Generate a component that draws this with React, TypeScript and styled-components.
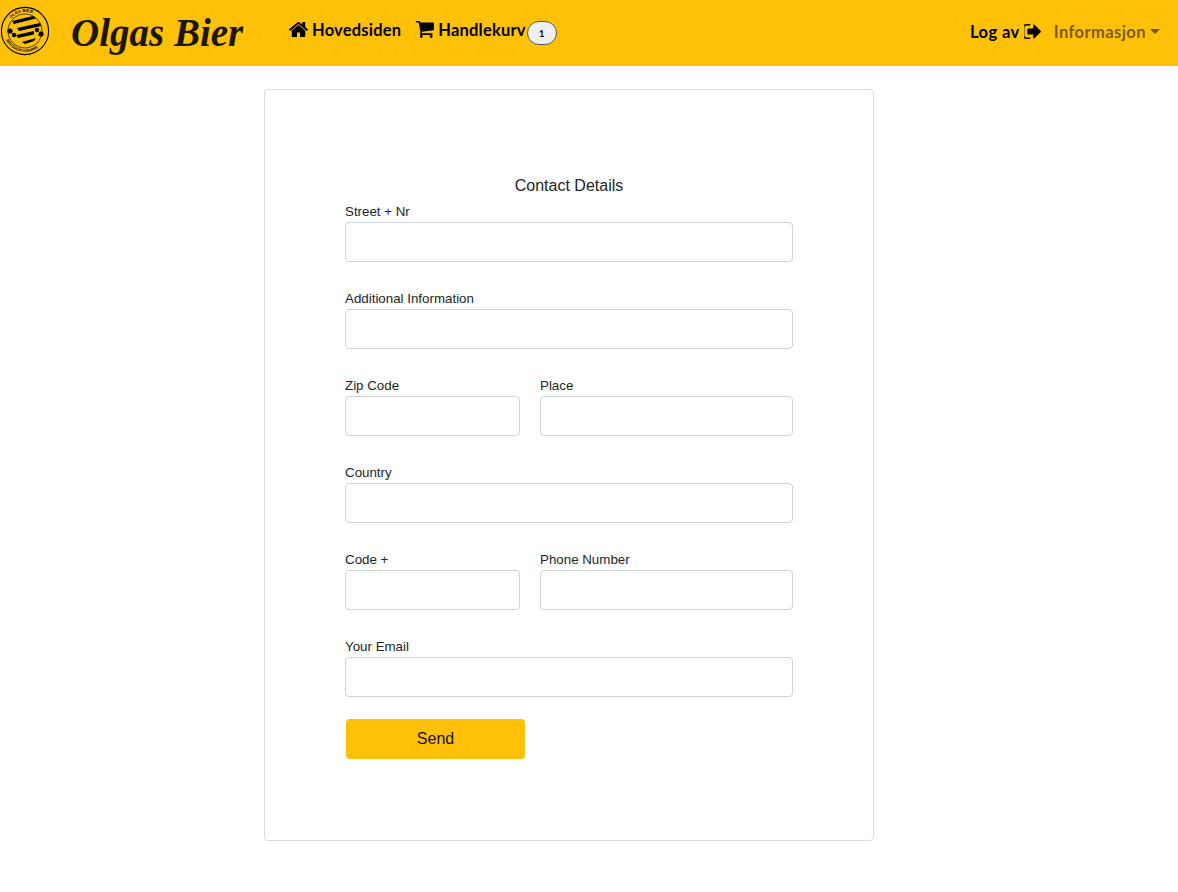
import React from 'react';
import styled, { createGlobalStyle } from 'styled-components';

const GlobalStyle = createGlobalStyle`
  * {
    box-sizing: border-box;
  }
  body {
    margin: 0;
    background: #fff;
    font-family: 'Liberation Sans', Arial, sans-serif;
    color: #212529;
  }
`;

const Navbar = styled.nav`
  display: flex;
  align-items: center;
  height: 66px;
  background: #ffc107;
`;

const LogoMark = styled.svg`
  width: 50px;
  height: 50px;
  margin-top: -4px;
  flex: none;
`;

const Brand = styled.a`
  margin-left: 21px;
  width: 218px;
  font-family: 'Liberation Serif', serif;
  font-size: 39px;
  font-style: italic;
  font-weight: 700;
  line-height: 66px;
  white-space: nowrap;
  color: #1c1708;
`;

const NavLinks = styled.div`
  display: flex;
  align-items: center;
  flex: 1;
  gap: 14px;
  margin-top: -7px;
`;

const NavLink = styled.a<{ $muted?: boolean }>`
  display: flex;
  align-items: center;
  gap: 4px;
  font-family: 'Lato', 'Noto Sans', sans-serif;
  font-size: 16.5px;
  font-weight: 700;
  letter-spacing: 0.2px;
  white-space: nowrap;
  color: ${(p) => (p.$muted ? 'rgba(0, 0, 0, 0.55)' : '#000')};
`;

const Icon = styled.svg<{ $w: number; $h: number }>`
  width: ${(p) => p.$w}px;
  height: ${(p) => p.$h}px;
  flex: none;
  fill: currentColor;
`;

const Badge = styled.span`
  display: inline-flex;
  align-items: center;
  justify-content: center;
  width: 30px;
  height: 24px;
  margin-left: -13px;
  margin-top: 7px;
  border: 1px solid #555;
  border-radius: 12px;
  background: #efefef;
  font-family: 'Lato', sans-serif;
  font-size: 10px;
  font-weight: 700;
  color: #111;
`;

const NavRight = styled.div`
  display: flex;
  align-items: center;
  gap: 13px;
  margin-top: -3px;
  padding-right: 18px;

  ${NavLink} {
    letter-spacing: 0.42px;
  }
`;

const Caret = styled.span`
  width: 0;
  height: 0;
  border-top: 5px solid currentColor;
  border-left: 5px solid transparent;
  border-right: 5px solid transparent;
`;

const Main = styled.main`
  padding: 23px 0 0 264px;
`;

const Card = styled.section`
  width: 610px;
  height: 752px;
  padding: 87px 80px 0;
  border: 1px solid #dcdcdc;
  border-radius: 4px;
`;

const Title = styled.h1`
  margin: 0;
  font-size: 16px;
  font-weight: 400;
  line-height: 18px;
  text-align: center;
`;

const Form = styled.form`
  display: flex;
  flex-direction: column;
  gap: 26px;
  margin-top: 6px;
`;

const Row = styled.div`
  display: grid;
  grid-template-columns: 175px 253px;
  gap: 20px;
`;

const Field = styled.label`
  display: block;
`;

const FieldLabel = styled.span`
  display: block;
  height: 21px;
  font-size: 13.33px;
  line-height: 21px;
  color: #212529;
`;

const Input = styled.input`
  display: block;
  width: 100%;
  height: 40px;
  padding: 0 12px;
  border: 1px solid #ced4da;
  border-radius: 4px;
  background: #fff;
`;

const SendButton = styled.button`
  display: block;
  width: 179px;
  height: 40px;
  margin: -4px 0 0 1px;
  border: 0;
  border-radius: 4px;
  background: #ffc107;
  font-family: 'Liberation Sans', Arial, sans-serif;
  font-size: 16px;
  color: #111;
`;

const Logo = () => (
  <LogoMark viewBox="0 0 50 50">
    <defs>
      <path id="logo-top" d="M7 24a18 18 0 0 1 36 0" />
      <path id="logo-bottom" d="M4 25a21 21 0 0 0 42 0" />
    </defs>
    <circle cx="25" cy="25" r="23.6" fill="none" stroke="#000" strokeWidth="1.1" />
    <circle cx="25" cy="25" r="17" fill="none" stroke="#000" strokeWidth="0.7" />
    <path d="M12 15 L33 10 L36 12.5 L14 18 Z" fill="#000" />
    <path d="M17 22 L40 17 L41 20 L19 25 Z" fill="#000" />
    <path d="M16 29 L34 25 L34 28.5 L18 32 Z" fill="#000" />
    <path d="M22 36 L36 32 L34 35 L25 38 Z" fill="#000" />
    <circle cx="10" cy="25" r="2.6" fill="#000" />
    <circle cx="14" cy="29" r="2.2" fill="#000" />
    <circle cx="37" cy="24" r="2.2" fill="#000" />
    <circle cx="41" cy="28" r="2.6" fill="#000" />
    <text fontSize="4.2" fontWeight="700" fontFamily="Liberation Sans, sans-serif">
      <textPath href="#logo-top" startOffset="22%">OLGA BIER</textPath>
    </text>
    <text fontSize="3.8" fontWeight="700" fontFamily="Liberation Sans, sans-serif">
      <textPath href="#logo-bottom" startOffset="14%">BRYGGERI HJEMME</textPath>
    </text>
  </LogoMark>
);

export default function App() {
  return (
    <>
      <GlobalStyle />
      <Navbar>
        <Logo />
        <Brand>Olgas Bier</Brand>
        <NavLinks>
          <NavLink>
            <Icon $w={19} $h={15} viewBox="96 256 1600 1280">
              <path d="M1472 992v480q0 26-19 45t-45 19h-384v-384h-256v384h-384q-26 0-45-19t-19-45v-480q0-1 .5-3t.5-3l575-474 575 474q1 2 1 6zm223-69l-62 74q-8 9-21 11h-3q-13 0-21-7l-692-577-692 577q-12 8-24 7-13-2-21-11l-62-74q-8-10-7-23.5t11-20.5l719-599q32-26 76-26t76 26l244 204v-195q0-14 9-23t23-9h192q14 0 23 9t9 23v408l219 182q10 8 11 21.5t-7 23.5z" />
            </Icon>
            Hovedsiden
          </NavLink>
          <NavLink>
            <Icon $w={19} $h={17} viewBox="0 256 1728 1408" preserveAspectRatio="none">
              <path d="M704 1536q0 52-38 90t-90 38-90-38-38-90 38-90 90-38 90 38 38 90zm896 0q0 52-38 90t-90 38-90-38-38-90 38-90 90-38 90 38 38 90zm128-1088v512q0 24-16.5 42.5t-40.5 21.5l-1044 122q13 60 13 70 0 16-24 64h920q26 0 45 19t19 45-19 45-45 19h-1024q-26 0-45-19t-19-45q0-11 8-31.5t16-36 21.5-40 15.5-29.5l-177-823h-204q-26 0-45-19t-19-45 19-45 45-19h256q16 0 28.5 6.5t19.5 15.5 13 24.5 8 26 5.5 29.5 4.5 26h1201q26 0 45 19t19 45z" />
            </Icon>
            Handlekurv
          </NavLink>
          <Badge>1</Badge>
        </NavLinks>
        <NavRight>
          <NavLink>
            Log av
            <Icon $w={17} $h={15} viewBox="160 256 1472 1280">
              <path d="M704 1440q0 4 1 20t.5 26.5-3 23.5-10 19.5-20.5 6.5h-320q-119 0-203.5-84.5t-84.5-203.5v-704q0-119 84.5-203.5t203.5-84.5h320q13 0 22.5 9.5t9.5 22.5q0 4 1 20t.5 26.5-3 23.5-10 19.5-20.5 6.5h-320q-66 0-113 47t-47 113v704q0 66 47 113t113 47h312l11.5 1 11.5 3 8 5.5 7 9 2 13.5zm928-544q0 26-19 45l-544 544q-19 19-45 19t-45-19-19-45v-288h-448q-26 0-45-19t-19-45v-384q0-26 19-45t45-19h448v-288q0-26 19-45t45-19 45 19l544 544q19 19 19 45z" />
            </Icon>
          </NavLink>
          <NavLink $muted>
            Informasjon
            <Caret />
          </NavLink>
        </NavRight>
      </Navbar>
      <Main>
        <Card>
          <Title>Contact Details</Title>
          <Form>
            <Field>
              <FieldLabel>Street + Nr</FieldLabel>
              <Input />
            </Field>
            <Field>
              <FieldLabel>Additional Information</FieldLabel>
              <Input />
            </Field>
            <Row>
              <Field>
                <FieldLabel>Zip Code</FieldLabel>
                <Input />
              </Field>
              <Field>
                <FieldLabel>Place</FieldLabel>
                <Input />
              </Field>
            </Row>
            <Field>
              <FieldLabel>Country</FieldLabel>
              <Input />
            </Field>
            <Row>
              <Field>
                <FieldLabel>Code +</FieldLabel>
                <Input />
              </Field>
              <Field>
                <FieldLabel>Phone Number</FieldLabel>
                <Input />
              </Field>
            </Row>
            <Field>
              <FieldLabel>Your Email</FieldLabel>
              <Input />
            </Field>
            <SendButton type="button">Send</SendButton>
          </Form>
        </Card>
      </Main>
    </>
  );
}
